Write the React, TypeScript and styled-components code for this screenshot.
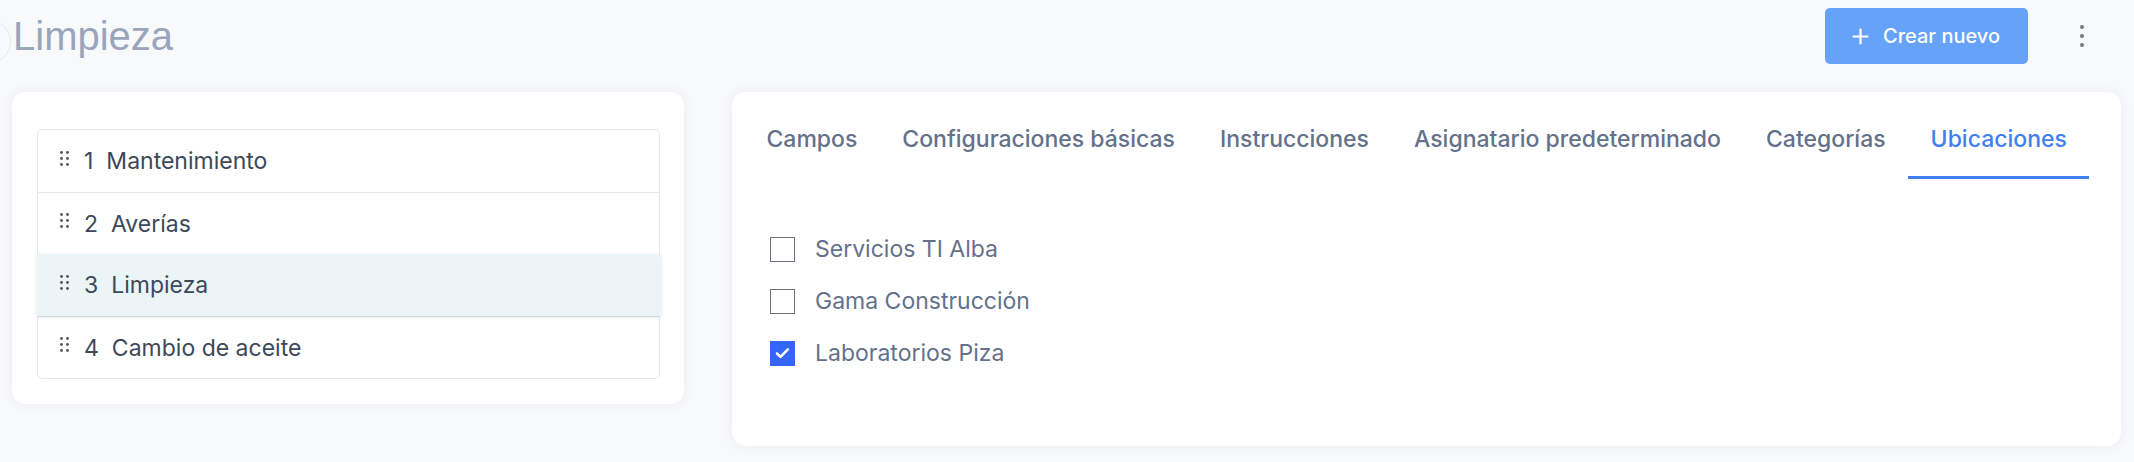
import React from "react";
import styled, { createGlobalStyle } from "styled-components";

const Global = createGlobalStyle`
  html, body { margin: 0; padding: 0; background: #f8f9fb; }
  body { font-family: Inter, "Noto Sans", sans-serif; -webkit-font-smoothing: antialiased; }
  * { box-sizing: border-box; }
`;

const Page = styled.div`
  position: relative;
  padding: 0 13px 0 12px;
  min-height: 462px;
  overflow: hidden;
`;

const EdgeToggle = styled.div`
  position: absolute;
  left: -32px;
  top: 20px;
  width: 43px;
  height: 43px;
  border-radius: 50%;
  border: 1px solid #e6e8ec;
  background: #f8f9fb;
`;

const Header = styled.header`
  display: flex;
  align-items: center;
  height: 72px;
  margin-bottom: 20px;
`;

const Title = styled.h1`
  margin: 0 0 0 1px;
  font-family: "Liberation Sans", Arial, sans-serif;
  font-weight: 400;
  font-size: 40px;
  line-height: 46px;
  color: #98a5ba;
  flex: 1;
`;

const PrimaryButton = styled.button`
  display: flex;
  align-items: center;
  gap: 14px;
  height: 56px;
  width: 203px;
  padding: 0 0 0 27px;
  border: none;
  border-radius: 5px;
  background: #66a3f8;
  color: #ffffff;
  font-family: Inter, sans-serif;
  font-size: 20px;
  font-weight: 500;
  cursor: pointer;
`;

const KebabButton = styled.button`
  width: 40px;
  height: 40px;
  margin: 0 19px 0 34px;
  display: flex;
  align-items: center;
  justify-content: center;
  border: none;
  background: transparent;
  padding: 0;
`;

const Columns = styled.div`
  display: flex;
  align-items: flex-start;
  gap: 48px;
`;

const Card = styled.section`
  background: #ffffff;
  border-radius: 14px;
  box-shadow: 0 0 14px rgba(30, 41, 59, 0.06);
`;

const ListCard = styled(Card)`
  width: 672px;
  flex: none;
  padding: 37px 24px 25px 25px;
`;

const SortList = styled.ul`
  list-style: none;
  margin: 0;
  padding: 0;
  border: 1px solid #e5e7eb;
  border-radius: 5px;
`;

const SortRow = styled.li<{ $active?: boolean }>`
  position: relative;
  display: flex;
  align-items: center;
  height: 62px;
  border-top: ${(p) => (p.$active ? "none" : "1px solid #e5e7eb")};
  background: ${(p) => (p.$active ? "#ebf4f6" : "transparent")};
  box-shadow: ${(p) => (p.$active ? "0 1px 4px rgba(15, 23, 42, 0.12)" : "none")};
  margin-right: ${(p) => (p.$active ? "-2px" : "0")};
  margin-left: ${(p) => (p.$active ? "-1px" : "0")};
  padding-left: ${(p) => (p.$active ? "23px" : "22px")};
  z-index: ${(p) => (p.$active ? 1 : 0)};
  &:first-child { border-top: none; }
  font-family: Inter, sans-serif;
  font-size: 23px;
  color: #3d4859;
`;

const Handle = styled.span`
  display: flex;
  width: 9px;
  margin-right: 15px;
  margin-top: -6px;
`;

const Num = styled.span`
  margin-right: 13px;
`;

const TabsCard = styled(Card)`
  flex: 1;
  padding: 0 0 79px 0;
`;

const TabBar = styled.nav`
  display: flex;
  padding-left: 12px;
`;

const Tab = styled.button<{ $active?: boolean }>`
  padding: 32px 22.5px 22px;
  border: none;
  background: transparent;
  border-bottom: 3px solid ${(p) => (p.$active ? "#4080f5" : "transparent")};
  font-family: Inter, sans-serif;
  font-size: 23px;
  line-height: 30px;
  font-weight: 500;
  color: ${(p) => (p.$active ? "#3f7ff2" : "#64718a")};
  white-space: nowrap;
  cursor: pointer;
`;

const Options = styled.div`
  display: flex;
  flex-direction: column;
  gap: 24px;
  padding: 56px 0 0 38px;
`;

const Option = styled.label`
  display: flex;
  align-items: center;
  gap: 20px;
  height: 28px;
  font-family: Inter, sans-serif;
  font-size: 23px;
  line-height: 28px;
  color: #64718a;
`;

const Box = styled.span<{ $checked?: boolean }>`
  width: 25px;
  height: 25px;
  flex: none;
  display: flex;
  align-items: center;
  justify-content: center;
  border: ${(p) => (p.$checked ? "none" : "1.5px solid #6b7280")};
  background: ${(p) => (p.$checked ? "#3366f6" : "#ffffff")};
`;

const DragDots = () => (
  <svg width="9" height="15" viewBox="0 0 9 15" fill="#4b5563">
    {[1.5, 7.5].map((x) =>
      [1.5, 7.5, 13.5].map((y) => <circle key={`${x}-${y}`} cx={x} cy={y} r="1.4" />)
    )}
  </svg>
);

const PlusIcon = () => (
  <svg width="17" height="17" viewBox="0 0 17 17" stroke="#fff" strokeWidth="2.2" strokeLinecap="round">
    <line x1="8.5" y1="1.5" x2="8.5" y2="15.5" />
    <line x1="1.5" y1="8.5" x2="15.5" y2="8.5" />
  </svg>
);

const KebabIcon = () => (
  <svg width="6" height="24" viewBox="0 0 6 24" fill="#7a7a7a">
    <circle cx="3" cy="3" r="2.1" />
    <circle cx="3" cy="12" r="2.1" />
    <circle cx="3" cy="21" r="2.1" />
  </svg>
);

const CheckIcon = () => (
  <svg width="15" height="12" viewBox="0 0 15 12" fill="none" stroke="#fff" strokeWidth="2.6" strokeLinecap="round" strokeLinejoin="round">
    <path d="M2 6.5 L5.5 9.8 L12.8 2.4" />
  </svg>
);

const items = ["Mantenimiento", "Averías", "Limpieza", "Cambio de aceite"];
const tabs = [
  "Campos",
  "Configuraciones básicas",
  "Instrucciones",
  "Asignatario predeterminado",
  "Categorías",
  "Ubicaciones",
];
const locations = [
  { name: "Servicios TI Alba", checked: false },
  { name: "Gama Construcción", checked: false },
  { name: "Laboratorios Piza", checked: true },
];

export default function App() {
  return (
    <>
      <Global />
      <Page>
        <EdgeToggle />
        <Header>
          <Title>Limpieza</Title>
          <PrimaryButton>
            <PlusIcon />
            Crear nuevo
          </PrimaryButton>
          <KebabButton aria-label="Más opciones">
            <KebabIcon />
          </KebabButton>
        </Header>
        <Columns>
          <ListCard>
            <SortList>
              {items.map((it, i) => (
                <SortRow key={it} $active={i === 2}>
                  <Handle>
                    <DragDots />
                  </Handle>
                  <Num>{i + 1}</Num>
                  {it}
                </SortRow>
              ))}
            </SortList>
          </ListCard>
          <TabsCard>
            <TabBar>
              {tabs.map((t) => (
                <Tab key={t} $active={t === "Ubicaciones"}>
                  {t}
                </Tab>
              ))}
            </TabBar>
            <Options>
              {locations.map((l) => (
                <Option key={l.name}>
                  <Box $checked={l.checked}>{l.checked && <CheckIcon />}</Box>
                  {l.name}
                </Option>
              ))}
            </Options>
          </TabsCard>
        </Columns>
      </Page>
    </>
  );
}
